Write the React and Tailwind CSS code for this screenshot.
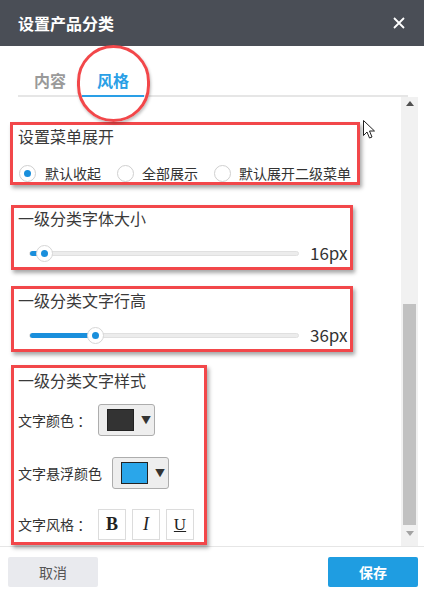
import React from "react";

function Radio({ checked, label, gap }) {
  return (
    <div className="flex items-center">
      <span className="w-[17px] h-[17px] rounded-full border border-[#cfcfcf] bg-white flex items-center justify-center">
        {checked && <span className="w-[7px] h-[7px] rounded-full bg-[#1a8fdc]" />}
      </span>
      <span className={`text-[14px] leading-[18px] text-[#333] ${gap}`}>{label}</span>
    </div>
  );
}

function Slider({ pos, value }) {
  return (
    <div className="flex items-center h-[20px] pl-[15px]">
      <div className="relative w-[270px] h-[5px] rounded-full bg-[#ececec] border border-[#e0e0e0]">
        <div
          className="absolute left-0 top-[-1px] h-[5px] rounded-l-full bg-[#1a8fdc]"
          style={{ width: pos + "px" }}
        />
        <div
          className="absolute top-[-7px] w-[17px] h-[17px] rounded-full bg-white border border-[#d6d6d6] flex items-center justify-center"
          style={{ left: pos - 8 + "px" }}
        >
          <span className="w-[7px] h-[7px] rounded-full bg-[#1a8fdc]" />
        </div>
      </div>
      <span className="ml-[11px] text-[17px] leading-[20px] text-[#333]">{value}</span>
    </div>
  );
}

function ColorPick({ color }) {
  return (
    <div className="w-[57px] h-[32px] rounded-[3px] border border-[#adadad] bg-[#eeeeee] flex items-center pl-[8px]">
      <span className="w-[27px] h-[22px] border border-[#222]" style={{ background: color }} />
      <span className="ml-[7px] text-[10px] leading-none text-[#333]">▼</span>
    </div>
  );
}

const box = "border-[3px] border-[#f2474a] shadow-[2px_3px_4px_rgba(0,0,0,0.35)]";

export default function App() {
  return (
    <div className="relative w-[424px] h-[593px] bg-white overflow-hidden font-['Microsoft_YaHei','Noto_Sans_CJK_SC',sans-serif]">
      {/* header */}
      <div className="h-[46px] bg-[#4a4e56] flex items-center justify-between pl-[18px] pr-[19px]">
        <span className="text-white text-[16px] font-bold leading-none">设置产品分类</span>
        <svg width="12" height="12" viewBox="0 0 12 12">
          <path d="M1 1L11 11M11 1L1 11" stroke="#fff" strokeWidth="1.8" />
        </svg>
      </div>

      {/* tabs */}
      <div className="mt-[19px] ml-[18px] mr-[16px] flex border-b-2 border-[#e6e6e6]">
        <div className="w-[64px] h-[30px] leading-[30px] text-center text-[16px] font-bold text-[#9a9a9a]">内容</div>
        <div className="w-[62px] h-[30px] leading-[30px] text-center text-[16px] font-bold text-[#2a9fe6] border-b-2 border-[#2a9fe6] -mb-[2px] box-content">风格</div>
      </div>

      {/* scroll area */}
      <div className="flex h-[449px]">
        <div className="flex-1 flex flex-col pt-[25px] items-start">
          {/* section 1 */}
          <div className={`ml-[10px] w-[350px] h-[63px] ${box} pl-[5px]`}>
            <div className="mt-[1px] text-[16px] leading-[20px] text-[#3a3a3a]">设置菜单展开</div>
            <div className="mt-[18px] flex items-center ml-[1px]">
              <Radio checked label="默认收起" gap="ml-[9px]" />
              <div className="ml-[16px]"><Radio label="全部展示" gap="ml-[8px]" /></div>
              <div className="ml-[16px]"><Radio label="默认展开二级菜单" gap="ml-[8px]" /></div>
            </div>
          </div>

          {/* section 2 */}
          <div className={`mt-[20px] ml-[11px] w-[342px] h-[65px] ${box}`}>
            <div className="ml-[4px] text-[16px] leading-[20px] text-[#3a3a3a]">一级分类字体大小</div>
            <div className="mt-[15px]">
              <Slider pos={14} value="16px" />
            </div>
          </div>

          {/* section 3 */}
          <div className={`mt-[16px] ml-[11px] w-[342px] h-[66px] ${box}`}>
            <div className="mt-[1px] ml-[4px] text-[16px] leading-[20px] text-[#3a3a3a]">一级分类文字行高</div>
            <div className="mt-[15px]">
              <Slider pos={65} value="36px" />
            </div>
          </div>

          {/* section 4 */}
          <div className={`mt-[13px] ml-[11px] w-[196px] h-[180px] ${box} pl-[4px]`}>
            <div className="mt-[2px] text-[16px] leading-[20px] text-[#3a3a3a]">一级分类文字样式</div>
            <div className="mt-[14px] flex items-center">
              <span className="text-[14px] text-[#333] w-[80px]">文字颜色 ：</span>
              <ColorPick color="#333333" />
            </div>
            <div className="mt-[21px] flex items-center gap-[10px]">
              <span className="text-[14px] text-[#333]">文字悬浮颜色</span>
              <ColorPick color="#2aa6ea" />
            </div>
            <div className="mt-[20px] flex items-center">
              <span className="text-[14px] text-[#333] w-[80px]">文字风格 ：</span>
              <div className="flex gap-[6px]">
                <span className="w-[28px] h-[31px] border border-[#dcdcdc] flex items-center justify-center font-['Liberation_Serif',serif] text-[18px] font-bold text-[#222]">B</span>
                <span className="w-[28px] h-[31px] border border-[#dcdcdc] flex items-center justify-center font-['Liberation_Serif',serif] text-[18px] italic text-[#222]">I</span>
                <span className="w-[28px] h-[31px] border border-[#dcdcdc] flex items-center justify-center font-['Liberation_Serif',serif] text-[17px] underline text-[#222]">U</span>
              </div>
            </div>
          </div>
        </div>

        {/* scrollbar */}
        <div className="w-[17px] mr-[6px] bg-[#f1f1f1] flex flex-col items-center">
          <svg className="mt-[4px]" width="8" height="5" viewBox="0 0 8 5"><path d="M0 5L4 0L8 5Z" fill="#505050" /></svg>
          <div className="mt-[198px] w-[13px] h-[221px] bg-[#c1c1c1]" />
          <svg className="mt-[6px]" width="8" height="5" viewBox="0 0 8 5"><path d="M0 0L8 0L4 5Z" fill="#a3a3a3" /></svg>
        </div>
      </div>

      {/* footer */}
      <div className="border-t border-[#e6e6e6] flex items-center justify-between pl-[8px] pr-[6px] pt-[10px]">
        <button className="w-[90px] h-[30px] rounded-[2px] bg-[#e9eaee] text-[14px] text-[#555]">取消</button>
        <button className="w-[90px] h-[30px] rounded-[2px] bg-[#1f9de1] text-[14px] font-bold text-white">保存</button>
      </div>

      {/* annotation circle */}
      <div className="absolute left-[77px] top-[45px] w-[73px] h-[77px] rounded-full border-[3px] border-[#f2474a] shadow-[1px_2px_3px_rgba(0,0,0,0.25)]" />

      {/* cursor */}
      <svg className="absolute left-[363px] top-[120px]" width="13" height="19" viewBox="0 0 13 19">
        <path d="M0.5 0.5L0.5 15.5L4 12L6.5 18L9 17L6.5 11L11.5 11Z" fill="#fff" stroke="#222" strokeWidth="1" strokeLinejoin="round" />
      </svg>
    </div>
  );
}
